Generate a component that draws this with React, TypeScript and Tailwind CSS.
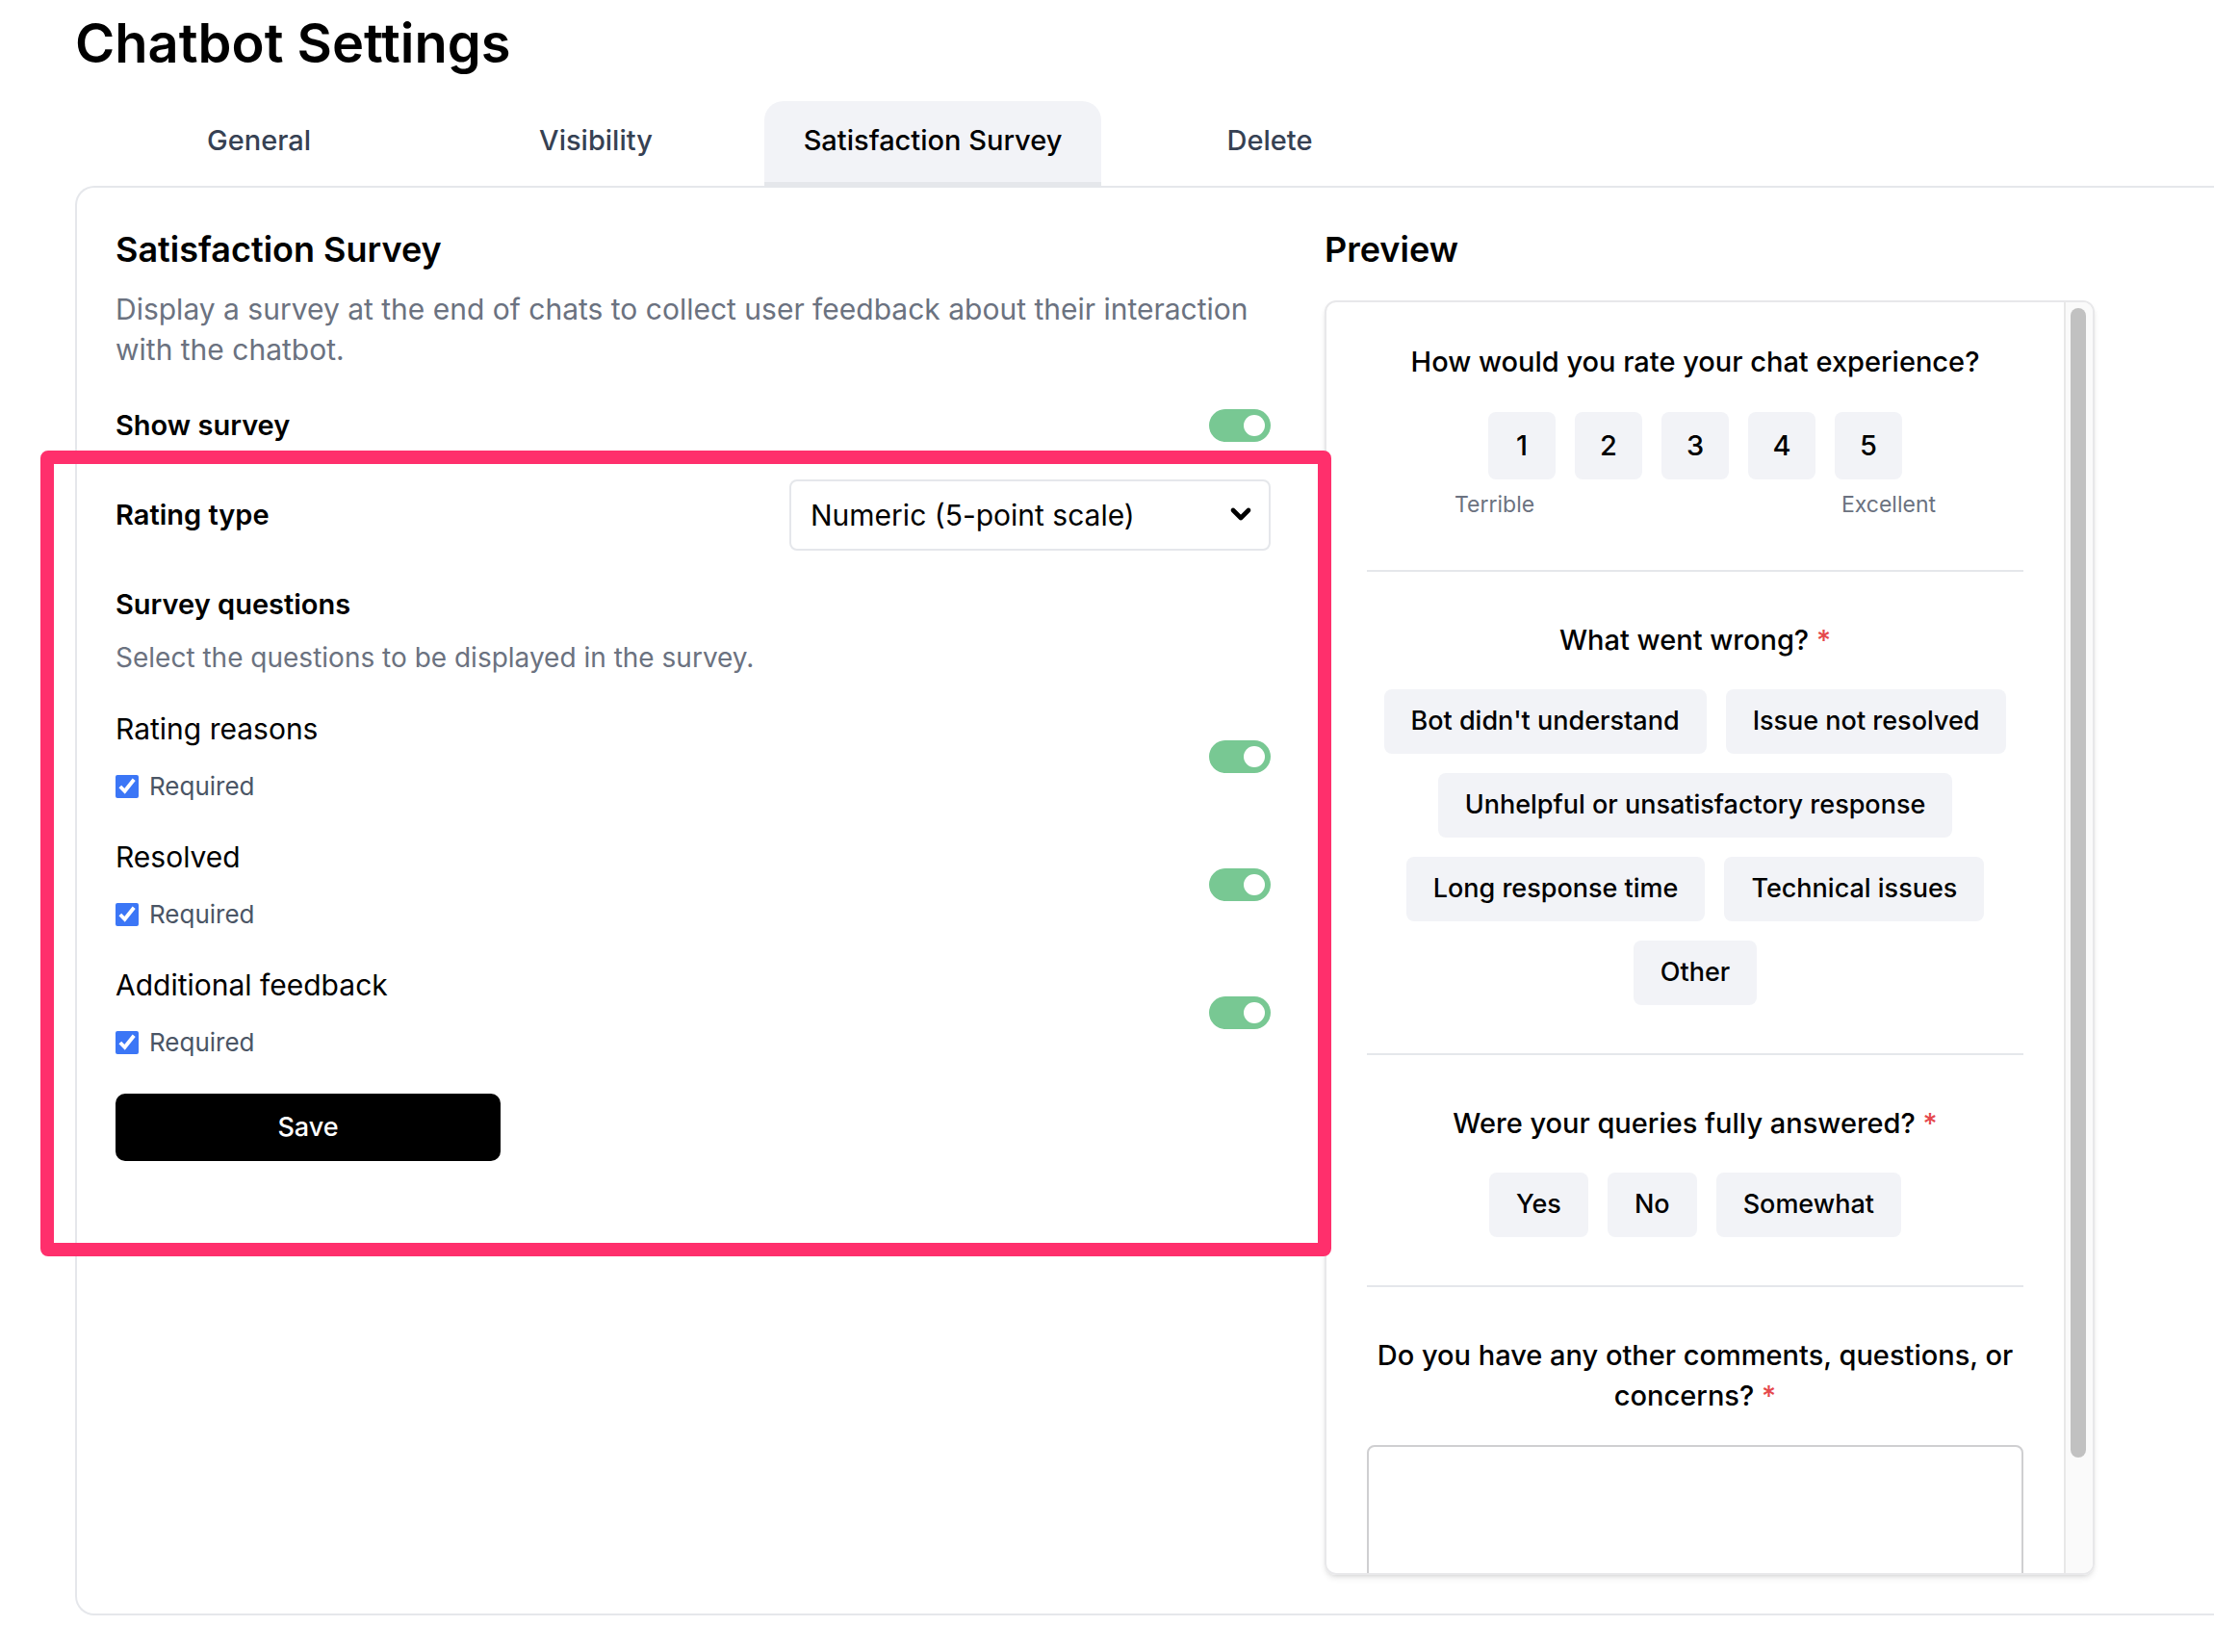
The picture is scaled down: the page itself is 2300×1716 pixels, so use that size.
import { useState } from "react";
import type { ReactNode } from "react";
import { ChevronDown } from "lucide-react";

const tabs = ["General", "Visibility", "Satisfaction Survey", "Delete"];

const questions = [
  { id: "reasons", label: "Rating reasons" },
  { id: "resolved", label: "Resolved" },
  { id: "feedback", label: "Additional feedback" },
];

const reasons = [
  "Bot didn't understand",
  "Issue not resolved",
  "Unhelpful or unsatisfactory response",
  "Long response time",
  "Technical issues",
  "Other",
];

function Toggle({ id, label }: { id: string; label: string }) {
  return (
    <input
      id={id}
      type="checkbox"
      role="switch"
      aria-label={label}
      defaultChecked
      className="flex h-[34px] w-16 shrink-0 cursor-pointer appearance-none items-center rounded-full bg-gray-300 px-1.5 before:size-[22px] before:rounded-full before:bg-white before:content-[''] checked:justify-end checked:bg-[#78c893]"
    />
  );
}

function Question({ children, required }: { children: ReactNode; required?: boolean }) {
  return (
    <h3 className="text-center text-[29px] leading-[42px] font-medium">
      {children} {required && <span className="text-[#e5484d]">*</span>}
    </h3>
  );
}

function Chip({ children }: { children: ReactNode }) {
  return (
    <button type="button" className="h-[67px] rounded-lg bg-[#f2f3f7] px-7 text-[27px] font-medium">
      {children}
    </button>
  );
}

function Preview() {
  return (
    <section className="w-[800px] shrink-0">
      <h2 className="text-[36px] leading-[48px] font-semibold">Preview</h2>
      <div className="mt-[29px] flex h-[1324px] overflow-hidden rounded-xl border-2 border-[#e8e8ea] shadow-md">
        <div className="flex-1 overflow-hidden px-[42px] pt-[41px]">
          <div className="border-b-2 border-gray-200 pb-[50px]">
            <Question>How would you rate your chat experience?</Question>
            <div className="mt-[31px] flex justify-center gap-5">
              {[1, 2, 3, 4, 5].map((n) => (
                <button key={n} type="button" className="size-[70px] rounded-lg bg-[#f2f3f7] text-[29px] font-medium">
                  {n}
                </button>
              ))}
            </div>
            <div className="mx-auto mt-2 flex max-w-[500px] justify-between text-[23px] leading-9 text-[#6b7280]">
              <span>Terrible</span>
              <span>Excellent</span>
            </div>
          </div>

          <div className="border-b-2 border-gray-200 py-[50px]">
            <Question required>What went wrong?</Question>
            <div className="mt-[30px] flex flex-wrap justify-center gap-5">
              {reasons.map((reason) => (
                <Chip key={reason}>{reason}</Chip>
              ))}
            </div>
          </div>

          <div className="border-b-2 border-gray-200 py-[50px]">
            <Question required>Were your queries fully answered?</Question>
            <div className="mt-[30px] flex justify-center gap-5">
              <Chip>Yes</Chip>
              <Chip>No</Chip>
              <Chip>Somewhat</Chip>
            </div>
          </div>

          <div className="pt-[50px]">
            <Question required>Do you have any other comments, questions, or concerns?</Question>
            <textarea
              aria-label="Comments"
              className="mt-[30px] block h-[240px] w-full resize-none rounded-lg border-2 border-[#cfcfd1] p-4 text-[27px]"
            />
          </div>
        </div>

        {/* Scroll track */}
        <div className="w-[30px] border-l-2 border-[#e8e8e8] bg-[#fafafa] pt-1.5 pl-[5px]">
          <div className="h-[1194px] w-4 rounded-full bg-[#c1c1c1]" />
        </div>
      </div>
    </section>
  );
}

export default function App() {
  const [active, setActive] = useState("Satisfaction Survey");

  return (
    <main className="min-h-screen overflow-hidden bg-white pt-[9px] pb-[37px] pl-[78px] font-['Inter',sans-serif] text-black">
      <h1 className="text-[56px] leading-[72px] font-semibold">Chatbot Settings</h1>

      <nav role="tablist" className="mt-6 flex px-4">
        {tabs.map((tab) => (
          <button
            key={tab}
            type="button"
            role="tab"
            aria-selected={tab === active}
            onClick={() => setActive(tab)}
            className={
              tab === active
                ? "w-[350px] rounded-t-[20px] border-b-[6px] border-gray-200 bg-[#f2f3f7] pt-5 pb-[22px] text-[29px] leading-[42px] font-medium"
                : "w-[350px] border-b-[6px] border-transparent pt-5 pb-[22px] text-[29px] leading-[42px] font-medium text-gray-700"
            }
          >
            {tab}
          </button>
        ))}
      </nav>

      <div className="-mt-0.5 flex gap-14 rounded-l-[20px] border-2 border-r-0 border-gray-200 p-10">
        <section className="max-w-[1200px] flex-1">
          <h2 className="text-[36px] leading-[48px] font-semibold">Satisfaction Survey</h2>
          <p className="mt-[17px] text-[30px] leading-[42px] text-[#6b7280]">
            Display a survey at the end of chats to collect user feedback about their interaction with the chatbot.
          </p>

          <div className="mt-[37px] flex items-center justify-between">
            <label htmlFor="show-survey" className="text-[29px] leading-[42px] font-semibold">
              Show survey
            </label>
            <Toggle id="show-survey" label="Show survey" />
          </div>

          <div className="relative mt-[35px]">
            <div className="flex items-center justify-between">
              <label htmlFor="rating-type" className="text-[29px] leading-[42px] font-semibold">
                Rating type
              </label>
              <div className="relative w-[500px]">
                <select
                  id="rating-type"
                  className="h-[74px] w-full appearance-none rounded-lg border-2 border-gray-200 bg-white px-5 text-[30px]"
                >
                  <option>Numeric (5-point scale)</option>
                </select>
                <ChevronDown className="pointer-events-none absolute top-5 right-[15px] size-8" strokeWidth={3.5} />
              </div>
            </div>

            <h3 className="mt-[35px] text-[29px] leading-[42px] font-semibold">Survey questions</h3>
            <p className="mt-[13px] text-[28px] leading-[42px] text-[#6b7280]">
              Select the questions to be displayed in the survey.
            </p>

            <div className="mt-8 flex flex-col gap-[34px]">
              {questions.map((q) => (
                <div key={q.id} className="flex items-center justify-between">
                  <div>
                    <label htmlFor={q.id} className="block text-[30px] leading-[42px]">
                      {q.label}
                    </label>
                    <label className="mt-[21px] flex items-center gap-[11px] text-[26px] leading-9 text-gray-600">
                      <input type="checkbox" defaultChecked className="size-6 accent-[#3b76f6]" />
                      Required
                    </label>
                  </div>
                  <Toggle id={q.id} label={q.label} />
                </div>
              ))}
            </div>

            <button
              type="button"
              className="mt-[35px] h-[70px] w-[400px] rounded-[10px] bg-black text-[27px] font-medium text-white"
            >
              Save
            </button>

            {/* Highlight frame around the survey options */}
            <div className="pointer-events-none absolute -top-[30px] -right-[63px] -bottom-[99px] -left-[78px] z-10 rounded-lg border-[14px] border-[#ff2f6c]" />
          </div>
        </section>

        <Preview />
      </div>
    </main>
  );
}
